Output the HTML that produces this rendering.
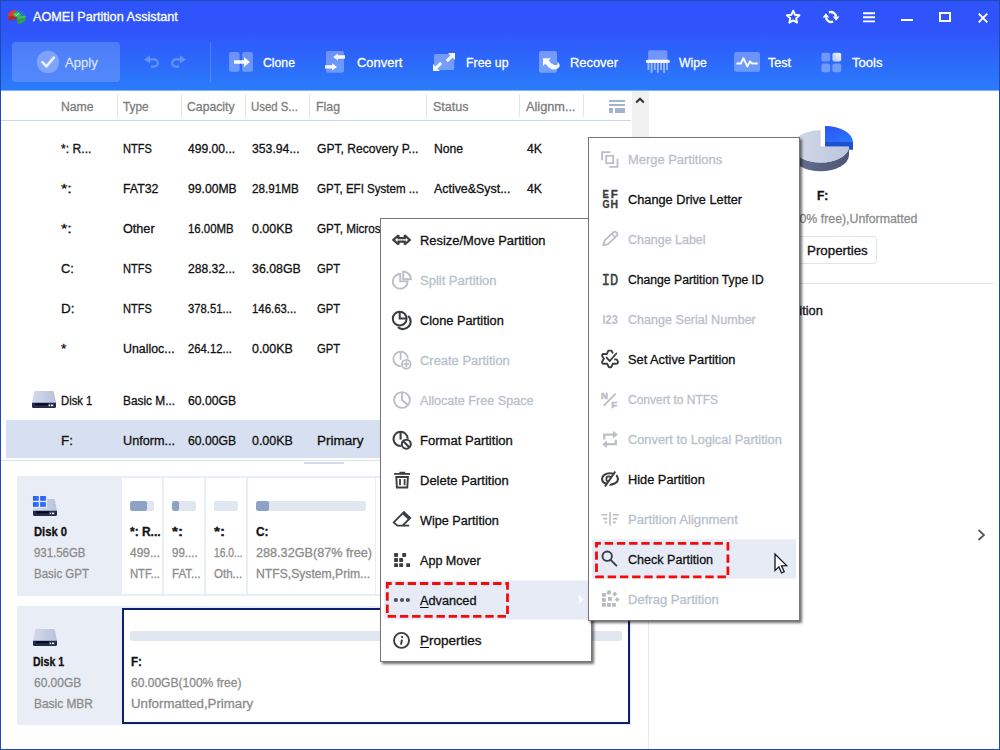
<!DOCTYPE html>
<html><head><meta charset="utf-8"><title>AOMEI Partition Assistant</title>
<style>
html,body{margin:0;padding:0}
body{width:1000px;height:750px;overflow:hidden;position:relative;background:#fff;font-family:"Liberation Sans",sans-serif}
.a{position:absolute}
.t{position:absolute;white-space:pre;line-height:16px;height:16px;transform-origin:0 50%;font-size:12.5px;color:#111;-webkit-text-stroke:.3px}
.t u{text-decoration-thickness:1px;text-underline-offset:2px}
#hdr{left:0;top:0;width:1000px;height:90px;background:linear-gradient(180deg,#3054fb 0px,#3054fb 30px,#2a7cfa 90px)}
.vsep{position:absolute;top:94px;width:1px;height:23px;background:#dfe6f2}
.menu{position:absolute;background:#fff;border:1px solid #767676;box-sizing:border-box;box-shadow:1.5px 1.5px 2.5px rgba(0,0,0,.56)}
.blk{position:absolute;background:#fff;top:478px;height:116px}
.bar{position:absolute;height:10px;border-radius:2px;background:#e1e7f1;overflow:hidden}
.bar i{position:absolute;left:0;top:0;height:10px;background:#8ea2c6;border-radius:2px}
svg{position:absolute;overflow:visible}
</style></head>
<body>
<!-- header -->
<div class="a" id="hdr"></div><div class="a" style="left:0;top:90px;width:1000px;height:1px;background:#80b1fc"></div>
<div class="a" style="left:12px;top:42px;width:108px;height:40px;border-radius:4px;background:linear-gradient(180deg,#4c7df9,#5389fb)"></div>
<svg style="left:36px;top:50px" width="24" height="24" viewBox="0 0 24 24"><circle cx="12" cy="12" r="11.2" fill="rgba(255,255,255,.27)"/><path d="M6.4 12.2 L10.4 16.4 L17.8 7.6" fill="none" stroke="rgba(255,255,255,.85)" stroke-width="2.6" stroke-linecap="round" stroke-linejoin="round"/></svg>
<svg style="left:144.4px;top:54.6px" width="16" height="14" viewBox="0 0 16 14"><path d="M0 4.4 L6 0.2 V8.6Z" fill="rgba(255,255,255,.27)"/><path d="M5.8 4.4 H10.2 A3.6 3.6 0 0 1 10.2 11.6 H7" fill="none" stroke="rgba(255,255,255,.27)" stroke-width="2.2"/></svg>
<svg style="left:170.6px;top:54.6px" width="16" height="14" viewBox="0 0 16 14"><g transform="translate(15,0) scale(-1,1)"><path d="M0 4.4 L6 0.2 V8.6Z" fill="rgba(255,255,255,.27)"/><path d="M5.8 4.4 H10.2 A3.6 3.6 0 0 1 10.2 11.6 H7" fill="none" stroke="rgba(255,255,255,.27)" stroke-width="2.2"/></g></svg>
<div class="a" style="left:210px;top:42px;width:1px;height:40px;background:rgba(255,255,255,.16)"></div>
<svg style="left:228px;top:50px" width="27" height="24" viewBox="228 50 27 24"><rect x="229.1" y="52.1" width="10.5" height="19.6" rx="2" fill="rgba(255,255,255,.3)"/><rect x="242.1" y="52.1" width="10.8" height="19.6" rx="2" fill="rgba(255,255,255,.3)"/><path d="M234 60.2 H244 V57 L249.8 62 L244 67 V63.8 H234Z" fill="#fff" fill-opacity=".95"/></svg>
<svg style="left:324px;top:50px" width="23" height="24" viewBox="324 50 23 24"><rect x="326" y="51" width="18" height="21.7" rx="2.2" fill="rgba(255,255,255,.3)"/><path d="M333.2 57 L338 53.4 V55.3 H345 V58.7 H338 V60.6Z" fill="#fff" fill-opacity=".95"/><path d="M337 66.9 L332.2 63.3 V65.2 H325 V68.6 H332.2 V70.5Z" fill="#fff" fill-opacity=".95"/></svg>
<svg style="left:432px;top:52px" width="24" height="20" viewBox="432 52 24 20"><rect x="434" y="54" width="20.2" height="16" rx="1.6" fill="rgba(255,255,255,.34)"/><path d="M448 53 H455 V60Z M452.6 57.6 L450.4 55.4 L445.7 60.1 L447.9 62.3Z M433 64 V71 H440Z M435.4 66.4 L437.6 68.6 L442.3 63.9 L440.1 61.7Z" fill="#fff" fill-opacity=".93"/></svg>
<svg style="left:538px;top:50px" width="24" height="24" viewBox="538 50 24 24"><rect x="539" y="51" width="18" height="21.8" rx="2" fill="rgba(255,255,255,.34)"/><path d="M543 58.2 H551 L548.8 60.4 Q552 65 556.6 65.2 Q558 64.4 557.4 61.6 Q561.8 65.6 557.8 68.6 Q551 72 545.4 63.8 L543 66Z" fill="#fff" fill-opacity=".95"/></svg>
<svg style="left:645px;top:50px" width="26" height="24" viewBox="645 50 26 24"><path d="M648.1 52 Q648.1 50.3 649.8 50.3 H665.6 Q667.3 50.3 667.3 52 V60.4 H648.1Z" fill="rgba(255,255,255,.32)"/><rect x="647.5" y="63" width="1.9" height="7" fill="rgba(255,255,255,.5)"/><rect x="650.6" y="63" width="1.9" height="9.7" fill="rgba(255,255,255,.5)"/><rect x="653.8000000000001" y="63" width="1.9" height="7" fill="rgba(255,255,255,.5)"/><rect x="656.9" y="63" width="1.9" height="9.7" fill="rgba(255,255,255,.5)"/><rect x="660.1" y="63" width="1.9" height="7" fill="rgba(255,255,255,.5)"/><rect x="663.1" y="63" width="1.9" height="9.7" fill="rgba(255,255,255,.5)"/><rect x="666.1" y="63" width="1.9" height="7" fill="rgba(255,255,255,.5)"/><rect x="645.9" y="59.8" width="23.9" height="3.1" rx="1.5" fill="#fff" fill-opacity=".95"/></svg>
<svg style="left:734px;top:52px" width="26" height="20" viewBox="734 52 26 20"><rect x="734.1" y="52.1" width="25.9" height="19.6" rx="2.2" fill="rgba(255,255,255,.3)"/><path d="M736.4 63.4 H741 L743.4 58.2 L747.4 66.4 L750 61.4 L751.8 63.4 H757.6" fill="none" stroke="#fff" stroke-opacity=".95" stroke-width="2" stroke-linejoin="round"/></svg>
<svg style="left:821px;top:52px" width="21" height="21" viewBox="821 52 21 21"><defs><linearGradient id="tg" x1="1" y1="0" x2="0" y2="1"><stop offset="0" stop-color="#fff" stop-opacity=".95"/><stop offset="1" stop-color="#fff" stop-opacity=".6"/></linearGradient></defs><rect x="821.4" y="52.8" width="8.8" height="8.8" rx="2" fill="rgba(255,255,255,.32)"/><rect x="832.4" y="52.8" width="8.8" height="8.8" rx="2" fill="url(#tg)"/><rect x="821.4" y="63.4" width="8.8" height="8.8" rx="2" fill="rgba(255,255,255,.32)"/><rect x="832.4" y="63.4" width="8.8" height="8.8" rx="2" fill="rgba(255,255,255,.32)"/></svg>
<svg style="left:780px;top:5px" width="30" height="24" viewBox="780 5 30 24"><polygon points="793.20,10.70 795.02,14.79 799.48,15.26 796.15,18.26 797.08,22.64 793.20,20.40 789.32,22.64 790.25,18.26 786.92,15.26 791.38,14.79" fill="none" stroke="#fff" stroke-width="1.9" stroke-linejoin="round"/></svg>
<svg style="left:820px;top:8px" width="22" height="18" viewBox="820 8 22 18"><g fill="none" stroke="#fff" stroke-width="2.3"><path d="M828.9 12.5 A5 5 0 0 1 836 16.6"/><path d="M833.1 21.5 A5 5 0 0 1 826 17.4"/></g><path d="M832.8 16.4 H839.4 L836.1 20.7Z M822.6 17.6 H829.2 L825.9 13.3Z" fill="#fff"/></svg>
<svg style="left:863px;top:12px" width="12" height="11" viewBox="0 0 12 11"><path d="M0 1.2 H12 M0 5.3 H12 M0 9.4 H12" stroke="#fff" stroke-width="1.9"/></svg>
<div class="a" style="left:901px;top:19px;width:12px;height:2px;background:#fff"></div>
<div class="a" style="left:939px;top:11.5px;width:12px;height:10.5px;box-sizing:border-box;border:2px solid #fff"></div>
<svg style="left:978px;top:12.5px" width="10" height="10" viewBox="0 0 10 10"><path d="M.7 .7 L9.3 9.3 M9.3 .7 L.7 9.3" stroke="#fff" stroke-width="1.9"/></svg>
<svg style="left:8px;top:9px" width="18" height="16" viewBox="0 0 18 16">
<path d="M7.8 1 C3 .8 .4 3.6 .3 6.5 L.8 11.6 L4.5 10.6 L8.6 9.4 L8 5Z" fill="#e8392f"/>
<path d="M.3 7.5 L.8 11.8 L8.6 9.6 L8.6 7 Z" fill="#b5271f"/>
<path d="M8.2 1 C13.5 .6 17.6 3.4 17.7 6.8 L12.5 7 L8.4 5Z" fill="#2a6fe0"/>
<path d="M9.2 7.2 L17.7 6.8 L17.6 11.2 C16 13.6 12.5 14.8 9.4 14.9Z" fill="#2f9e4d"/>
<path d="M9.2 7.2 L17.7 6.8 L17.7 8.8 L9.2 9.4Z" fill="#3bbd5e"/>
<ellipse cx="9" cy="5.4" rx="3.9" ry="2.5" fill="#27c24f"/>
<path d="M7.2 5.6 L8.4 6.4 L10.8 4.4" fill="none" stroke="#d8ffe0" stroke-width=".9"/>
</svg>
<!-- table header -->
<div class="a" style="left:1px;top:120px;width:630px;height:1px;background:#cbd9ee"></div>
<div class="vsep" style="left:117px"></div><div class="vsep" style="left:181px"></div><div class="vsep" style="left:245px"></div>
<div class="vsep" style="left:309px"></div><div class="vsep" style="left:426px"></div><div class="vsep" style="left:519px"></div><div class="vsep" style="left:583px"></div>
<svg style="left:609px;top:100px" width="16" height="14"><g fill="#a3b3cf"><rect x="0" y="0" width="16" height="2"/><rect x="0" y="4" width="16" height="2"/><rect x="0" y="8" width="4" height="5"/><rect x="6" y="8" width="10" height="5"/></g></svg>
<!-- scroll column -->
<div class="a" style="left:632px;top:91px;width:17px;height:370px;background:#f1f1f1"></div>
<svg style="left:635px;top:96px" width="10" height="8"><path d="M1.2 6.5 L5 2.7 L8.8 6.5" fill="none" stroke="#333" stroke-width="2"/></svg>
<!-- selected row -->
<div class="a" style="left:6px;top:420px;width:625px;height:38px;background:#d6e0f0"></div>
<!-- splitter -->
<div class="a" style="left:1px;top:460px;width:648px;height:1px;background:#dfe5f0"></div>
<div class="a" style="left:304px;top:462px;width:40px;height:2px;background:#d3dceb"></div>
<div class="a" style="left:648px;top:461px;width:1px;height:288px;background:#e3e8f2"></div>
<!-- disk row icon in list -->
<!--DISKICONS-->
<!-- disk map -->
<div class="a" style="left:17px;top:476px;width:614px;height:120px;background:#e9edf5"></div>
<div class="blk" style="left:122px;width:40px"></div><div class="blk" style="left:164px;width:40px"></div><div class="blk" style="left:206px;width:40px"></div>
<div class="blk" style="left:248px;width:126.5px"></div><div class="blk" style="left:376px;width:126px"></div><div class="blk" style="left:504px;width:125px"></div>
<div class="bar" style="left:130px;top:501px;width:24px"><i style="width:17px"></i></div>
<div class="bar" style="left:172px;top:501px;width:24px"><i style="width:7px"></i></div>
<div class="bar" style="left:214px;top:501px;width:24px"></div>
<div class="bar" style="left:256px;top:501px;width:110px"><i style="width:13px"></i></div>
<div class="a" style="left:17px;top:606px;width:614px;height:119px;background:#e9edf5"></div>
<div class="a" style="left:122px;top:608px;width:508px;height:116px;box-sizing:border-box;border:2px solid #0c1f70;background:#fff"></div>
<div class="bar" style="left:130px;top:631px;width:492px"></div>
<!-- right panel -->
<div class="a" style="left:656px;top:283px;width:338px;height:1px;background:#dde5f1"></div>
<div class="a" style="left:797px;top:236px;width:80px;height:28px;box-sizing:border-box;border:1px solid #dfe4ee;border-radius:3px;background:#fff"></div>
<svg style="left:780px;top:118px" width="90" height="62" viewBox="780 118 90 62"><defs>
<linearGradient id="pg1" x1="0" y1="0" x2="1" y2="0"><stop offset="0" stop-color="#d4dae9"/><stop offset="1" stop-color="#bcc5dc"/></linearGradient>
<linearGradient id="pg2" x1="0" y1="0" x2="1" y2="0"><stop offset="0" stop-color="#66728f"/><stop offset="1" stop-color="#4a5674"/></linearGradient>
<linearGradient id="pg3" x1="0" y1="0" x2="1" y2="1"><stop offset="0" stop-color="#2d4ff6"/><stop offset="1" stop-color="#2a7cfb"/></linearGradient></defs>
<path d="M792.2 146.4 A28.4 16.2 0 0 0 849 146.4 V155 A28.4 16.2 0 0 1 792.2 155Z" fill="url(#pg2)"/>
<path d="M820.6 146.6 L820.6 130.2 A28.4 16.2 0 1 0 849 146.6Z" fill="url(#pg1)"/>
<path d="M825 142 H853 V149.8 L849 149.8 V146.6 H825Z" fill="#1f4fd2"/>
<path d="M825 142 L825 126 A28 16 0 0 1 853 142Z" fill="url(#pg3)"/>
</svg><svg style="left:32px;top:391px" width="24" height="17" viewBox="0 0 24 17"><defs><linearGradient id="dga" x1="0" y1="0" x2="1" y2="0"><stop offset="0" stop-color="#d3daeb"/><stop offset="1" stop-color="#b8c2db"/></linearGradient></defs>
<path d="M3.2 0 L20.8 0 Q21.6 0 21.9 .9 L24 11.9 L0 11.9 L2.1 .9 Q2.4 0 3.2 0Z" fill="url(#dga)"/>
<path d="M0 11.8 H24 V15.4 Q24 17 22.4 17 H1.6 Q0 17 0 15.4Z" fill="#232c4b"/>
<path d="M3 12.2 H16 V13.4 Q16 14.2 15.2 14.2 H3.8 Q3 14.2 3 13.4Z" fill="#060a1c"/>
<rect x="16.7" y="13.6" width="1.5" height="1.6" fill="#fff"/><rect x="19" y="13.6" width="2.2" height="1.6" fill="#fff"/></svg><svg style="left:33px;top:499px" width="24" height="17" viewBox="0 0 24 17"><defs><linearGradient id="dgb" x1="0" y1="0" x2="1" y2="0"><stop offset="0" stop-color="#d3daeb"/><stop offset="1" stop-color="#b8c2db"/></linearGradient></defs>
<path d="M3.2 0 L20.8 0 Q21.6 0 21.9 .9 L24 11.9 L0 11.9 L2.1 .9 Q2.4 0 3.2 0Z" fill="url(#dgb)"/>
<path d="M0 11.8 H24 V15.4 Q24 17 22.4 17 H1.6 Q0 17 0 15.4Z" fill="#232c4b"/>
<path d="M3 12.2 H16 V13.4 Q16 14.2 15.2 14.2 H3.8 Q3 14.2 3 13.4Z" fill="#060a1c"/>
<rect x="16.7" y="13.6" width="1.5" height="1.6" fill="#fff"/><rect x="19" y="13.6" width="2.2" height="1.6" fill="#fff"/></svg><svg style="left:32px;top:495px" width="15" height="13" viewBox="-1 -1 15 13"><defs><linearGradient id="wg" x1="0" y1="0" x2="1" y2="0"><stop offset="0" stop-color="#3157ff"/><stop offset="1" stop-color="#2a7bff"/></linearGradient></defs>
<rect x="-1" y="-1" width="15" height="12.8" fill="#e9edf5"/>
<g fill="url(#wg)"><rect x="0" y="0" width="5.8" height="4.8"/><rect x="7.2" y="0" width="5.8" height="4.8"/><rect x="0" y="6.1" width="5.8" height="4.7"/><rect x="7.2" y="6.1" width="5.8" height="4.7"/></g></svg><svg style="left:33px;top:629.4px" width="24" height="17" viewBox="0 0 24 17"><defs><linearGradient id="dgc" x1="0" y1="0" x2="1" y2="0"><stop offset="0" stop-color="#d3daeb"/><stop offset="1" stop-color="#b8c2db"/></linearGradient></defs>
<path d="M3.2 0 L20.8 0 Q21.6 0 21.9 .9 L24 11.9 L0 11.9 L2.1 .9 Q2.4 0 3.2 0Z" fill="url(#dgc)"/>
<path d="M0 11.8 H24 V15.4 Q24 17 22.4 17 H1.6 Q0 17 0 15.4Z" fill="#232c4b"/>
<path d="M3 12.2 H16 V13.4 Q16 14.2 15.2 14.2 H3.8 Q3 14.2 3 13.4Z" fill="#060a1c"/>
<rect x="16.7" y="13.6" width="1.5" height="1.6" fill="#fff"/><rect x="19" y="13.6" width="2.2" height="1.6" fill="#fff"/></svg>
<svg style="left:977px;top:529px" width="9" height="12"><path d="M1.5 1 L7 6 L1.5 11" fill="none" stroke="#555" stroke-width="1.7"/></svg>
<span class="t" style="left:33.2px;top:8.80px;font-size:13px;color:#fff;transform:scaleX(0.9728);">AOMEI Partition Assistant</span>
<span class="t" style="left:64.5px;top:54.62px;font-size:13.5px;color:rgba(255,255,255,.72);transform:scaleX(0.9680);">Apply</span>
<span class="t" style="left:262.5px;top:54.62px;font-size:13.5px;color:#fff;transform:scaleX(0.9070);">Clone</span>
<span class="t" style="left:356.7px;top:54.62px;font-size:13.5px;color:#fff;transform:scaleX(0.9581);">Convert</span>
<span class="t" style="left:465.5px;top:54.62px;font-size:13.5px;color:#fff;transform:scaleX(0.9134);">Free up</span>
<span class="t" style="left:569.5px;top:54.62px;font-size:13.5px;color:#fff;transform:scaleX(0.9546);">Recover</span>
<span class="t" style="left:679.2px;top:54.62px;font-size:13.5px;color:#fff;transform:scaleX(0.9036);">Wipe</span>
<span class="t" style="left:768.2px;top:54.62px;font-size:13.5px;color:#fff;transform:scaleX(0.9287);">Test</span>
<span class="t" style="left:852.0px;top:54.62px;font-size:13.5px;color:#fff;transform:scaleX(0.9678);">Tools</span>
<span class="t" style="left:60.8px;top:98.97px;color:#7d7d7d;transform:scaleX(0.9777);">Name</span>
<span class="t" style="left:123.2px;top:98.97px;color:#7d7d7d;transform:scaleX(0.9443);">Type</span>
<span class="t" style="left:187.2px;top:98.97px;color:#7d7d7d;transform:scaleX(0.9786);">Capacity</span>
<span class="t" style="left:251.2px;top:98.97px;color:#7d7d7d;transform:scaleX(0.9101);">Used S...</span>
<span class="t" style="left:315.6px;top:98.97px;color:#7d7d7d;transform:scaleX(0.9865);">Flag</span>
<span class="t" style="left:432.5px;top:98.97px;color:#7d7d7d;transform:scaleX(1.0018);">Status</span>
<span class="t" style="left:525.5px;top:98.97px;color:#7d7d7d;transform:scaleX(1.0177);">Alignm...</span>
<span class="t" style="left:61.2px;top:140.97px;transform:scaleX(0.9723);">*: R...</span>
<span class="t" style="left:123.4px;top:140.97px;transform:scaleX(0.8823);">NTFS</span>
<span class="t" style="left:188.3px;top:140.97px;transform:scaleX(0.9701);">499.00...</span>
<span class="t" style="left:252.2px;top:140.97px;transform:scaleX(0.9783);">353.94...</span>
<span class="t" style="left:316.5px;top:140.97px;transform:scaleX(0.9687);">GPT, Recovery P...</span>
<span class="t" style="left:433.5px;top:140.97px;transform:scaleX(0.9735);">None</span>
<span class="t" style="left:526.5px;top:140.97px;transform:scaleX(0.9806);">4K</span>
<span class="t" style="left:61.2px;top:180.97px;transform:scaleX(1.2944);">*:</span>
<span class="t" style="left:123.4px;top:180.97px;transform:scaleX(0.9859);">FAT32</span>
<span class="t" style="left:188.3px;top:180.97px;transform:scaleX(0.9734);">99.00MB</span>
<span class="t" style="left:252.2px;top:180.97px;transform:scaleX(0.9354);">28.91MB</span>
<span class="t" style="left:316.5px;top:180.97px;transform:scaleX(0.9239);">GPT, EFI System ...</span>
<span class="t" style="left:433.5px;top:180.97px;transform:scaleX(0.9921);">Active&amp;Syst...</span>
<span class="t" style="left:526.5px;top:180.97px;transform:scaleX(0.9806);">4K</span>
<span class="t" style="left:61.2px;top:220.97px;transform:scaleX(1.2944);">*:</span>
<span class="t" style="left:123.4px;top:220.97px;transform:scaleX(1.0107);">Other</span>
<span class="t" style="left:188.3px;top:220.97px;transform:scaleX(0.9134);">16.00MB</span>
<span class="t" style="left:252.2px;top:220.97px;transform:scaleX(0.9947);">0.00KB</span>
<span class="t" style="left:316.5px;top:220.97px;transform:scaleX(0.9330);">GPT, Micros</span>
<span class="t" style="left:61.2px;top:260.97px;transform:scaleX(1.0240);">C:</span>
<span class="t" style="left:123.4px;top:260.97px;transform:scaleX(0.8823);">NTFS</span>
<span class="t" style="left:188.3px;top:260.97px;transform:scaleX(0.9701);">288.32...</span>
<span class="t" style="left:252.2px;top:260.97px;transform:scaleX(0.9890);">36.08GB</span>
<span class="t" style="left:316.5px;top:260.97px;transform:scaleX(0.8987);">GPT</span>
<span class="t" style="left:61.2px;top:300.97px;transform:scaleX(1.0800);">D:</span>
<span class="t" style="left:123.4px;top:300.97px;transform:scaleX(0.8823);">NTFS</span>
<span class="t" style="left:188.3px;top:300.97px;transform:scaleX(0.9022);">378.51...</span>
<span class="t" style="left:252.2px;top:300.97px;transform:scaleX(0.9105);">146.63...</span>
<span class="t" style="left:316.5px;top:300.97px;transform:scaleX(0.8987);">GPT</span>
<span class="t" style="left:61.2px;top:340.97px;transform:scaleX(1.0872);">*</span>
<span class="t" style="left:123.4px;top:340.97px;transform:scaleX(0.9902);">Unalloc...</span>
<span class="t" style="left:188.3px;top:340.97px;transform:scaleX(0.9022);">264.12...</span>
<span class="t" style="left:252.2px;top:340.97px;transform:scaleX(0.9947);">0.00KB</span>
<span class="t" style="left:316.5px;top:340.97px;transform:scaleX(0.8987);">GPT</span>
<span class="t" style="left:61.2px;top:392.97px;transform:scaleX(0.9011);">Disk 1</span>
<span class="t" style="left:123.4px;top:392.97px;transform:scaleX(0.9494);">Basic M...</span>
<span class="t" style="left:188.3px;top:392.97px;transform:scaleX(0.9768);">60.00GB</span>
<span class="t" style="left:61.2px;top:432.97px;transform:scaleX(1.0712);">F:</span>
<span class="t" style="left:123.4px;top:432.97px;transform:scaleX(1.0135);">Unform...</span>
<span class="t" style="left:188.3px;top:432.97px;transform:scaleX(0.9768);">60.00GB</span>
<span class="t" style="left:252.2px;top:432.97px;transform:scaleX(0.9947);">0.00KB</span>
<span class="t" style="left:316.5px;top:432.97px;transform:scaleX(1.0798);">Primary</span>
<span class="t" style="left:33.6px;top:523.97px;font-weight:700;transform:scaleX(0.8957);">Disk 0</span>
<span class="t" style="left:33.6px;top:544.97px;color:#8c8c8c;transform:scaleX(0.9130);">931.56GB</span>
<span class="t" style="left:33.6px;top:565.97px;color:#8c8c8c;transform:scaleX(0.9205);">Basic GPT</span>
<span class="t" style="left:130.0px;top:523.97px;font-weight:700;transform:scaleX(0.9577);">*: R...</span>
<span class="t" style="left:130.4px;top:544.97px;color:#8c8c8c;transform:scaleX(0.9590);">499...</span>
<span class="t" style="left:130.4px;top:565.97px;color:#8c8c8c;transform:scaleX(0.8997);">NTF...</span>
<span class="t" style="left:172.0px;top:523.97px;font-weight:700;transform:scaleX(1.2180);">*:</span>
<span class="t" style="left:172.4px;top:544.97px;color:#8c8c8c;transform:scaleX(0.9210);">99....</span>
<span class="t" style="left:172.4px;top:565.97px;color:#8c8c8c;transform:scaleX(0.9217);">FAT...</span>
<span class="t" style="left:214.4px;top:523.97px;font-weight:700;transform:scaleX(1.2180);">*:</span>
<span class="t" style="left:214.4px;top:544.97px;color:#8c8c8c;transform:scaleX(0.8230);">16.0...</span>
<span class="t" style="left:214.4px;top:565.97px;color:#8c8c8c;transform:scaleX(0.9222);">Oth...</span>
<span class="t" style="left:256.4px;top:523.97px;font-weight:700;transform:scaleX(0.9543);">C:</span>
<span class="t" style="left:256.4px;top:544.97px;color:#8c8c8c;transform:scaleX(1.0117);">288.32GB(87% free)</span>
<span class="t" style="left:256.4px;top:565.97px;color:#8c8c8c;transform:scaleX(0.9729);">NTFS,System,Prim...</span>
<span class="t" style="left:33.4px;top:653.97px;font-weight:700;transform:scaleX(0.8441);">Disk 1</span>
<span class="t" style="left:33.6px;top:674.97px;color:#8c8c8c;transform:scaleX(0.9566);">60.00GB</span>
<span class="t" style="left:33.6px;top:695.97px;color:#8c8c8c;transform:scaleX(0.9526);">Basic MBR</span>
<span class="t" style="left:130.8px;top:653.97px;font-weight:700;transform:scaleX(0.9312);">F:</span>
<span class="t" style="left:130.8px;top:674.97px;color:#8c8c8c;transform:scaleX(0.9629);">60.00GB(100% free)</span>
<span class="t" style="left:130.8px;top:695.97px;color:#8c8c8c;transform:scaleX(1.0597);">Unformatted,Primary</span>
<span class="t" style="left:816.6px;top:187.97px;font-weight:700;transform:scaleX(0.9651);">F:</span>
<span class="t" style="left:733.0px;top:210.97px;color:#8c8c8c;transform:scaleX(0.9866);">60.00GB(100% free),Unformatted</span>
<span class="t" style="left:806.6px;top:242.97px;transform:scaleX(1.0670);">Properties</span>
<span class="t" style="left:697.7px;top:302.97px;transform:scaleX(1.0273);">Resize/Move Partition</span>
<!-- menu 1 -->
<div class="menu" style="left:380px;top:218px;width:212px;height:444px"></div>
<svg style="left:380px;top:576px" width="212" height="48" viewBox="380 576 212 48"><rect x="384.3" y="580.5" width="204" height="39" fill="#e6ebf6"/></svg>
<svg style="left:380px;top:576px" width="140" height="48" viewBox="380 576 140 48"><rect x="387.3" y="583.5" width="120.2" height="32.8" fill="none" stroke="#f50a0a" stroke-width="2.8" stroke-dasharray="8.4 3.8" stroke-dashoffset="4"/></svg>
<svg style="left:579px;top:595px" width="5" height="9"><path d="M0 0 L4.5 4.2 L0 8.4Z" fill="#fff"/></svg>
<svg style="left:390px;top:230px" width="24" height="20" viewBox="390 230 24 20"><path d="M393.4 239.9 L398.5 235.3 V238.20000000000002 H404.7 V235.3 L409.8 239.9 L404.7 244.5 V241.6 H398.5 V244.5Z" fill="none" stroke="#3b3e43" stroke-width="2.2" stroke-linejoin="miter" stroke-miterlimit="2"/></svg>
<svg style="left:390px;top:268px" width="24" height="24" viewBox="390 268 24 24"><g fill="none" stroke="#bbbec6" stroke-width="1.9" stroke-linejoin="miter"><path d="M400.2 274 A7.4 7.4 0 1 0 407.6 281.4 H400.2Z"/><path d="M403.2 279.2 V271.5 A7.7 7.7 0 0 1 410.9 279.2Z"/></g></svg>
<svg style="left:390px;top:308px" width="24" height="24" viewBox="390 308 24 24"><g fill="none" stroke="#3b3e43" stroke-width="2"><circle cx="399.7" cy="318.6" r="6.9"/><path d="M399.7 311.7 V318.6 H406.6" /><path d="M408.9 316.6 A7.6 7.6 0 0 1 398.6 327.6" stroke-width="2.2" stroke-linecap="round"/></g></svg>
<svg style="left:390px;top:348px" width="24" height="24" viewBox="390 348 24 24"><g fill="none" stroke="#bbbec6" stroke-width="1.8"><circle cx="400.6" cy="358.9" r="7.2"/><path d="M400.6 351.7 V359.8"/><circle cx="406.3" cy="364.2" r="5" fill="#fff" stroke="#fff" stroke-width="1.6"/><circle cx="406.3" cy="364.2" r="4.4"/><path d="M406.3 361.4 V367 M403.5 364.2 H409.1" stroke-width="1.8"/></g></svg>
<svg style="left:390px;top:388px" width="24" height="24" viewBox="390 388 24 24"><g fill="none" stroke="#bbbec6" stroke-width="1.9"><circle cx="402" cy="400" r="7.9"/><path d="M402 392.1 V400 L408 405"/></g></svg>
<svg style="left:390px;top:428px" width="24" height="24" viewBox="390 428 24 24"><g fill="none" stroke="#3b3e43" stroke-width="2.1"><circle cx="400.6" cy="438.9" r="7.1"/><path d="M400.6 431.8 V439.6"/><circle cx="406.3" cy="444.2" r="5" fill="#fff" stroke="#fff" stroke-width="1.6"/><circle cx="406.3" cy="444.2" r="4.5"/><path d="M403.1 441 L409.5 447.4"/></g></svg>
<svg style="left:392px;top:470px" width="20" height="20" viewBox="392 470 20 20"><g fill="none" stroke="#3b3e43" stroke-linejoin="miter"><path d="M394.1 473.9 H410" stroke-width="1.8"/><path d="M399.4 472.4 H405.2" stroke-width="1.3"/><path d="M396.3 477 H407.9 L407.3 487.5 H396.9Z" stroke-width="1.9"/><path d="M400 479 V485.2 M404.6 479 V485.2" stroke-width="1.8"/></g></svg>
<svg style="left:390px;top:508px" width="24" height="22" viewBox="390 508 24 22"><path d="M403.9 512.1 L410.2 518 L408.4 519.8 L402.1 513.9Z" fill="#3b3e43"/><path d="M402.6 525.7 H397.4 L393.7 522.4 L403.9 512.1 L410.2 518 L402.6 525.7 H409.2" fill="none" stroke="#3b3e43" stroke-width="1.8" stroke-linejoin="miter"/></svg>
<svg style="left:392px;top:550px" width="20" height="20" viewBox="392 550 20 20"><rect x="394.1" y="553" width="3.9" height="3.9" rx=".7" fill="#3b3e43"/><rect x="402.2" y="553" width="3.9" height="3.9" rx=".7" fill="#3b3e43"/><rect x="394.1" y="558.1" width="3.9" height="3.9" rx=".7" fill="#3b3e43"/><rect x="399.2" y="558.1" width="3.9" height="3.9" rx=".7" fill="#3b3e43"/><rect x="394.1" y="563.2" width="3.9" height="3.9" rx=".7" fill="#3b3e43"/><rect x="399.2" y="563.2" width="3.9" height="3.9" rx=".7" fill="#3b3e43"/><rect x="406.2" y="563.2" width="3.9" height="3.9" rx=".7" fill="#3b3e43"/></svg>
<svg style="left:392px;top:596px" width="20" height="8" viewBox="392 596 20 8"><circle cx="395.9" cy="600" r="2.1" fill="#4f5157"/><circle cx="402" cy="600" r="2.1" fill="#4f5157"/><circle cx="407.9" cy="600" r="2.1" fill="#4f5157"/></svg>
<svg style="left:392px;top:631px" width="20" height="20" viewBox="392 631 20 20"><circle cx="401.5" cy="640.4" r="7.5" fill="none" stroke="#3b3e43" stroke-width="1.9"/><rect x="401.1" y="636" width="1.9" height="1.9" fill="#3b3e43"/><path d="M402 639.6 L401 644.6" stroke="#3b3e43" stroke-width="2" fill="none"/></svg>
<span class="t" style="left:420.2px;top:232.97px;transform:scaleX(1.0323);">Resize/Move Partition</span>
<span class="t" style="left:420.2px;top:272.97px;color:#b9bfcb;transform:scaleX(1.0386);">Split Partition</span>
<span class="t" style="left:420.2px;top:312.97px;transform:scaleX(1.0220);">Clone Partition</span>
<span class="t" style="left:420.2px;top:352.97px;color:#b9bfcb;transform:scaleX(1.0339);">Create Partition</span>
<span class="t" style="left:420.2px;top:392.97px;color:#b9bfcb;transform:scaleX(1.0083);">Allocate Free Space</span>
<span class="t" style="left:420.2px;top:432.97px;transform:scaleX(1.0436);">Format Partition</span>
<span class="t" style="left:420.2px;top:472.97px;transform:scaleX(1.0390);">Delete Partition</span>
<span class="t" style="left:420.2px;top:512.97px;transform:scaleX(1.0127);">Wipe Partition</span>
<span class="t" style="left:420.2px;top:552.97px;transform:scaleX(1.0057);">App Mover</span>
<span class="t" style="left:420.2px;top:592.97px;transform:scaleX(1.0160);"><u>A</u>dvanced</span>
<span class="t" style="left:420.2px;top:632.97px;transform:scaleX(1.0792);"><u>P</u>roperties</span>
<!-- menu 2 -->
<div class="menu" style="left:588px;top:137px;width:212px;height:484px"></div>
<svg style="left:590px;top:536px" width="210" height="48" viewBox="590 536 210 48"><rect x="592.3" y="539.4" width="203.7" height="39.2" fill="#e6ebf6"/></svg>
<svg style="left:590px;top:536px" width="150" height="48" viewBox="590 536 150 48"><rect x="596.5" y="543.4" width="131.4" height="33.4" fill="none" stroke="#f50a0a" stroke-width="2.8" stroke-dasharray="8.4 3.8" stroke-dashoffset="4"/></svg>
<svg style="left:599px;top:149px" width="22" height="22" viewBox="599 149 22 22"><g fill="none" stroke="#bbbec6" stroke-width="1.8"><rect x="606.2" y="155.8" width="7" height="7.4"/><path d="M602.1 160.2 V152.1 H610.4"/><path d="M617.5 158.8 V166.8 H609.2"/></g></svg>
<svg style="left:600px;top:188px" width="22" height="22" viewBox="600 188 22 22"><text transform="translate(602.6 197.6) scale(0.95 1)" font-family="Liberation Sans, sans-serif" font-weight="700" font-size="10" fill="#3b3e43" stroke="#3b3e43" stroke-width=".3">E</text><text transform="translate(610.8 197.6) scale(1.15 1)" font-family="Liberation Sans, sans-serif" font-weight="700" font-size="10" fill="#3b3e43" stroke="#3b3e43" stroke-width=".3">F</text><text transform="translate(602.6 207.6) scale(0.92 1)" font-family="Liberation Sans, sans-serif" font-weight="700" font-size="10" fill="#3b3e43" stroke="#3b3e43" stroke-width=".3">G</text><text transform="translate(610.6 207.6) scale(1.05 1)" font-family="Liberation Sans, sans-serif" font-weight="700" font-size="10" fill="#3b3e43" stroke="#3b3e43" stroke-width=".3">H</text></svg>
<svg style="left:600px;top:229px" width="22" height="20" viewBox="600 229 22 20"><g fill="none" stroke="#bbbec6" stroke-width="1.8" stroke-linejoin="round"><path d="M603.3 245.3 L604.5 240.6 L613.2 232.3 Q614.8 231 616.3 232.4 L616.8 232.9 Q618.1 234.4 616.7 235.9 L608 244.1 Z"/><path d="M611.8 233.8 L615.4 237.4" stroke-width="1.4"/></g></svg>
<svg style="left:600px;top:270px" width="22" height="18" viewBox="600 270 22 18"><text x="601.8" y="284.9" textLength="16.4" lengthAdjust="spacingAndGlyphs" font-family="Liberation Mono, monospace" font-size="17" fill="#3b3e43" stroke="#3b3e43" stroke-width=".5">ID</text></svg>
<svg style="left:600px;top:312px" width="22" height="14" viewBox="600 312 22 14"><text x="602.4" y="323.7" textLength="15.4" lengthAdjust="spacingAndGlyphs" font-family="Liberation Sans, sans-serif" font-weight="700" font-size="12.8" fill="#bbbec6">I23</text></svg>
<svg style="left:600px;top:349px" width="22" height="22" viewBox="600 349 22 22"><g fill="none" stroke="#3b3e43" stroke-width="1.9" stroke-linecap="round" stroke-linejoin="round"><path d="M612.6 352.8 L611.6 350.9 Q611.4 350.6 611 350.6 H608.8 Q608.3 350.6 608.1 351 L606.9 354 H603.6 Q602.6 354 602.2 354.9 Q601.8 355.6 602.3 356.3 L603.9 358.7 L602.3 361.2 Q601.8 361.9 602.2 362.8 Q602.6 363.8 603.6 363.8 H607.3 L608.5 366.6 Q608.8 367.3 609.5 367.3 H610.6 Q611.3 367.3 611.6 366.6 L612.7 363.8 H616.4 Q617.4 363.8 617.9 362.9 Q618.4 362 617.8 361.2 L616.9 359.8 Q616.6 359.4 616 359.4 H615"/><path d="M606.5 357.7 L609.8 361 L616.3 353.5"/></g></svg>
<svg style="left:600px;top:390px" width="22" height="20" viewBox="600 390 22 20"><text transform="translate(601 398.6) scale(1.0 1)" font-family="Liberation Sans, sans-serif" font-weight="700" font-size="9.6" fill="#bbbec6" stroke="#bbbec6" stroke-width=".6">N</text><text transform="translate(611.2 407.7) scale(1.0 1)" font-family="Liberation Sans, sans-serif" font-weight="700" font-size="9.6" fill="#bbbec6" stroke="#bbbec6" stroke-width=".6">F</text><path d="M603.6 405.8 L615.6 393.6" stroke="#bbbec6" stroke-width="1.8"/></svg>
<svg style="left:600px;top:429px" width="22" height="20" viewBox="600 429 22 20"><g fill="none" stroke="#bbbec6" stroke-width="2.2"><path d="M604.2 439.4 V434.6 H613.6"/><path d="M615.8 439.8 V444.2 H606.4"/></g><path d="M613 430.8 L617.9 434.6 L613 438.4Z M607 440.4 L602.1 444.2 L607 448Z" fill="#bbbec6"/></svg>
<svg style="left:599px;top:469px" width="22" height="20" viewBox="599 469 22 20"><g fill="none" stroke="#3b3e43"><ellipse cx="610" cy="478.9" rx="8" ry="5.7" stroke-width="2.1"/><circle cx="608.8" cy="478.9" r="2.5" stroke-width="1.7"/><path d="M607 486.6 L617.4 471.6" stroke="#fff" stroke-width="2"/><path d="M604.9 486.5 L615.3 471.5" stroke-width="2"/></g></svg>
<svg style="left:600px;top:510px" width="22" height="18" viewBox="600 510 22 18"><g stroke="#bbbec6" stroke-width="1.6" fill="none"><path d="M610 512 V525.6"/><path d="M601.2 514.8 H607.2 M603 518.6 H607.2 M604.6 522.4 H607.2"/><path d="M612.8 514.8 H618.8 M612.8 518.6 H617.4 M612.8 522.4 H615.8"/></g></svg>
<svg style="left:600px;top:549px" width="20" height="20" viewBox="600 549 20 20"><g fill="none" stroke="#3b3e43" stroke-width="1.9"><circle cx="607.2" cy="556.2" r="4.7"/><path d="M610.6 559.8 L616.4 565.6" stroke-linecap="round"/></g></svg>
<svg style="left:600px;top:589px" width="22" height="20" viewBox="600 589 22 20"><rect x="602" y="593" width="3.8" height="3.8" fill="#b7bac1"/><rect x="602" y="598" width="3.8" height="3.8" fill="#b7bac1"/><rect x="602" y="603" width="3.8" height="3.8" fill="#b7bac1"/><rect x="608" y="597" width="3.8" height="3.8" fill="#b7bac1"/><rect x="607" y="603" width="3.8" height="3.8" fill="#b7bac1"/><rect x="612" y="603" width="3.8" height="3.8" fill="#b7bac1"/><rect x="607.1" y="590.5" width="3.8" height="3.8" fill="#b7bac1" transform="rotate(15 609 592.4)"/><rect x="613.05" y="592.25" width="3.5" height="3.5" fill="#b7bac1" transform="rotate(45 614.8 594)"/><rect x="615.45" y="597.85" width="3.5" height="3.5" fill="#b7bac1" transform="rotate(45 617.2 599.6)"/></svg>
<span class="t" style="left:628.2px;top:151.97px;color:#b9bfcb;transform:scaleX(1.0339);">Merge Partitions</span>
<span class="t" style="left:628.2px;top:191.97px;transform:scaleX(1.0199);">Change Drive Letter</span>
<span class="t" style="left:628.2px;top:231.97px;color:#b9bfcb;transform:scaleX(0.9954);">Change Label</span>
<span class="t" style="left:628.2px;top:271.97px;transform:scaleX(0.9739);">Change Partition Type ID</span>
<span class="t" style="left:628.2px;top:311.97px;color:#b9bfcb;transform:scaleX(1.0051);">Change Serial Number</span>
<span class="t" style="left:628.2px;top:351.97px;transform:scaleX(1.0246);">Set Active Partition</span>
<span class="t" style="left:628.2px;top:391.97px;color:#b9bfcb;transform:scaleX(0.9607);">Convert to NTFS</span>
<span class="t" style="left:628.2px;top:431.97px;color:#b9bfcb;transform:scaleX(1.0247);">Convert to Logical Partition</span>
<span class="t" style="left:628.2px;top:471.97px;transform:scaleX(1.0234);">Hide Partition</span>
<span class="t" style="left:628.2px;top:511.97px;color:#b9bfcb;transform:scaleX(1.0534);">Partition Alignment</span>
<span class="t" style="left:628.2px;top:551.97px;transform:scaleX(1.0039);">Check Partition</span>
<span class="t" style="left:628.2px;top:591.97px;color:#b9bfcb;transform:scaleX(1.0454);">Defrag Partition</span>
<!-- cursor -->
<svg style="left:773.5px;top:553px" width="14" height="23" viewBox="0 0 14 23"><path d="M1 1 L1 17.6 L4.9 13.9 L7.6 20 L10.2 18.8 L7.5 12.8 L12.6 12.6 Z" fill="#fff" stroke="#10141f" stroke-width="1.3" stroke-linejoin="miter"/></svg>
<!-- window border -->
<div class="a" style="left:0;top:0;width:1px;height:750px;background:#1a4cb3"></div>
<div class="a" style="left:999px;top:0;width:1px;height:750px;background:#1a4cb3"></div>
<div class="a" style="left:0;top:749px;width:1000px;height:1px;background:#1a4cb3"></div>
<div class="a" style="left:0;top:0;width:1000px;height:1px;background:#1a4cb3"></div>
</body></html>
